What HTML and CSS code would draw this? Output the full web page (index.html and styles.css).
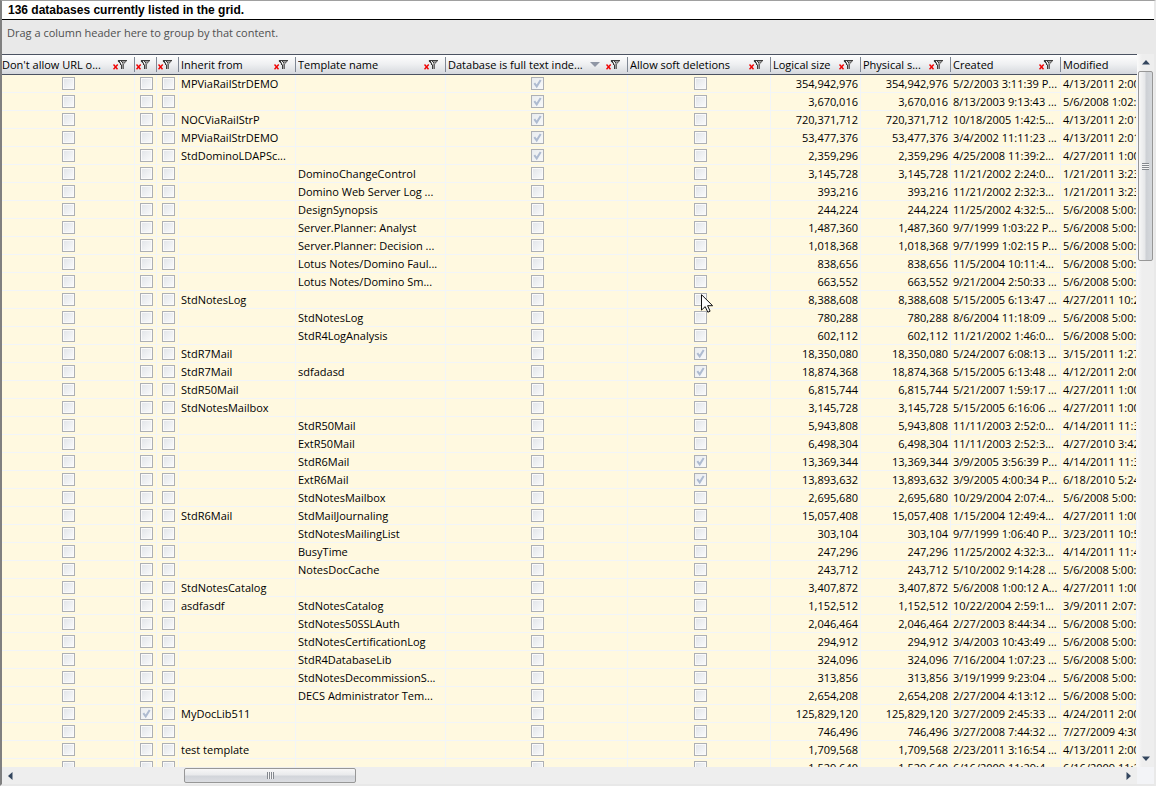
FILE: index.html
```html
<!DOCTYPE html>
<html lang="en">
<head>
<meta charset="utf-8">
<title>Databases</title>
<link rel="stylesheet" href="styles.css">
</head>
<body>
<svg class="defs" aria-hidden="true">
  <symbol id="filter" viewBox="0 0 14 10">
    <path d="M5 0h9v1l-3.5 4v4H8V5L4.5 1z" fill="#9a9a9a"/>
    <path d="M5 0h9v1H5zM5 1h2v1H5zM6 2h1v1H6zM7 3h1v2H7zM8 5h1v4H8zM9 2h1v1H9zM8 1h1v1H8z" fill="#3c3c3c"/>
    <path d="M7 1h1v1H7zM8 2h1v1H8zM8 3h1v1H8z" fill="#f2f2f2"/>
    <path d="M12 1h1v1h-1zM11 2h1v1h-1zM10 4h1v5h-1z" fill="#6a6a6a"/>
    <path d="M.5 4.5l4 4.8M4.7 4.5.5 9.3" stroke="#f00000" stroke-width="1.4"/>
  </symbol>
</svg>
<main class="panel">
  <h1 class="title">136 databases currently listed in the grid.</h1>
  <div class="group-bar">Drag a column header here to group by that content.</div>
  <div class="grid">
    <div class="viewport">
      <table class="table">
        <colgroup>
          <col class="w-url"><col class="w-flag"><col class="w-flag"><col class="w-inherit"><col class="w-template"><col class="w-index"><col class="w-soft"><col class="w-size"><col class="w-size"><col class="w-date"><col>
        </colgroup>
        <thead><tr id="head"></tr></thead>
        <tbody id="rows"></tbody>
      </table>
      <svg class="cursor" viewBox="0 0 12 19" aria-hidden="true"><path d="M.5.7v15.4l3.7-3.5 2.6 5.6 2.3-1-2.5-5.5h5z" fill="#fff" stroke="#111"/></svg>
    </div>
    <div class="vbar">
      <button class="arrow" aria-label="Scroll up"><svg width="8" height="5"><path d="M0 4.5 4 0l4 4.5z"/></svg></button>
      <div class="vtrack"><div class="thumb vthumb"></div></div>
      <button class="arrow" aria-label="Scroll down"><svg width="8" height="5"><path d="M0 .5h8L4 5z"/></svg></button>
    </div>
    <div class="hbar">
      <button class="arrow" aria-label="Scroll left"><svg width="5" height="8"><path d="M4.5 0v8L0 4z"/></svg></button>
      <div class="htrack"><div class="thumb hthumb"></div></div>
      <button class="arrow" aria-label="Scroll right"><svg width="5" height="8"><path d="M.5 0v8L5 4z"/></svg></button>
    </div>
    <div class="corner"></div>
  </div>
</main>
<script src="grid.js"></script>
</body>
</html>
```
FILE: styles.css
```css
* { box-sizing: border-box; }
body {
  margin: 0;
  font: 11px/17px "Open Sans", "Noto Sans", sans-serif;
  color: #000;
  background: #f0f0f0;
}
.defs { position: absolute; width: 0; height: 0; }
.panel {
  display: flex;
  flex-direction: column;
  height: 100vh;
  border: 1px solid #a0a0a0;
  border-left: 2px solid #808080;
  border-right: 2px solid #e9e9e9;
  border-bottom: 2px solid #e8e8e8;
  background: #e9e9e9;
}
.title {
  margin: 0;
  padding-left: 6px;
  font: bold 12px/18px "Liberation Sans", Arial, sans-serif;
  background: #fff;
  border-bottom: 1px solid #000;
}
.group-bar {
  height: 34px;
  padding: 4px 5px;
  color: #505050;
}
.grid {
  flex: 1;
  min-height: 0;
  display: grid;
  grid-template-columns: minmax(0, 1fr) 17px;
  grid-template-rows: minmax(0, 1fr) 17px;
}
.viewport { position: relative; overflow: hidden; background: #fff9e0; }
.table { width: 100%; table-layout: fixed; border-collapse: separate; border-spacing: 0; }
.w-url { width: 133px; }
.w-flag { width: 22px; }
.w-inherit { width: 117px; }
.w-template { width: 150px; }
.w-index { width: 182px; }
.w-soft { width: 143px; }
.w-size { width: 90px; }
.w-date { width: 110px; }
th {
  height: 21px;
  padding: 0;
  font-weight: normal;
  text-align: left;
  background: linear-gradient(#fff, #eeeff1 50%, #d5d8dd);
  border-top: 1px solid #4c5362;
  border-bottom: 1px solid #4c5362;
}
.head {
  display: flex;
  align-items: center;
  height: 15px;
  padding: 0 7px 0 2px;
  border-right: 1px solid #7f8794;
  overflow: hidden;
  white-space: nowrap;
  line-height: 15px;
}
.head.bare { padding: 0 6px 0 1px; }
th:last-child .head { border-right: 0; }
th:first-child .head { padding-left: 0; }
.head-text { flex: 1; overflow: hidden; }
.sort { width: 10px; height: 5px; margin-right: 6px; fill: #8f96a5; }
.filter { display: flex; flex: none; padding: 0; border: 0; background: none; }
.filter svg { width: 14px; height: 10px; }
td {
  height: 18px;
  padding: 0 0 0 2px;
  line-height: 17px;
  overflow: hidden;
  white-space: nowrap;
  background: #fff9e0;
  border-right: 1px solid #f2f5f8;
  border-bottom: 1px solid #f2f5f8;
}
.num { padding: 0 2px 0 0; text-align: right; }
.flag { padding: 0 0 0 2px; text-align: center; font-size: 0; }
.flag:first-child { padding: 0; }
.check {
  appearance: none;
  width: 13px;
  height: 13px;
  margin: 0;
  vertical-align: middle;
  border: 1px solid #adb0b5;
  background: linear-gradient(135deg, #e3e6ea, #f8f9fa) 50% / 9px 9px no-repeat #fafafa;
}
.check:checked {
  background:
    url("data:image/svg+xml,%3Csvg xmlns='http://www.w3.org/2000/svg' viewBox='0 0 11 11'%3E%3Cpath d='M2.3 5.2 4.7 8.4 8.7 2' fill='none' stroke='%23aebbd0' stroke-width='2'/%3E%3C/svg%3E") center / 11px 11px no-repeat,
    linear-gradient(135deg, #e9ecef, #f8f9fa);
}
.cursor { position: absolute; left: 699px; top: 240px; width: 12px; height: 19px; }
.vbar, .hbar { display: flex; background: #eee; }
.vbar { flex-direction: column; background: linear-gradient(90deg, #fafafa, #eee 30%); }
.vtrack, .htrack { flex: 1; min-width: 0; min-height: 0; }
.arrow {
  display: flex;
  align-items: center;
  justify-content: center;
  width: 17px;
  height: 17px;
  padding: 0;
  border: 0;
  background: none;
}
.arrow svg { fill: #34465e; }
.thumb {
  display: flex;
  align-items: center;
  justify-content: center;
  border: 1px solid #979797;
  border-radius: 2px;
}
.vthumb { width: 15px; height: 28%; margin-left: 1px; background: linear-gradient(90deg, #f7f7f7, #e6e7e9 45%, #cdd0d5 55%, #d6d9dd); }
.hthumb { width: 172px; height: 15px; margin: 1px 0 0 15%; background: linear-gradient(#f7f7f7, #e9eaec 45%, #d2d5da 55%, #dcdee2); }
.vthumb::before { content: ""; width: 7px; height: 7px; background: repeating-linear-gradient(#84888e 0 1px, #f4f4f4 1px 2px); }
.hthumb::before { content: ""; width: 7px; height: 7px; background: repeating-linear-gradient(90deg, #84888e 0 1px, #f4f4f4 1px 2px); }
.corner { background: #f3f4f7; }
```
FILE: grid.js
```js
const columns = [
  { label: "Don't allow URL o...", filter: true },
  { name: "Flag 1", filter: true },
  { name: "Flag 2", filter: true },
  { label: "Inherit from", filter: true },
  { label: "Template name", filter: true },
  { label: "Database is full text inde...", filter: true, sorted: true },
  { label: "Allow soft deletions", filter: true },
  { label: "Logical size", filter: true },
  { label: "Physical s...", filter: true },
  { label: "Created", filter: true },
  { label: "Modified" }
];

// inherit from | template | ticked column (m: flag 1, f: full text, s: soft deletions) | size | created | modified
const data = `MPViaRailStrDEMO||f|354,942,976|5/2/2003 3:11:39 P...|4/13/2011 2:00:1
||f|3,670,016|8/13/2003 9:13:43 ...|5/6/2008 1:02:51
NOCViaRailStrP||f|720,371,712|10/18/2005 1:42:5...|4/13/2011 2:01:1
MPViaRailStrDEMO||f|53,477,376|3/4/2002 11:11:23 ...|4/13/2011 2:01:1
StdDominoLDAPSc...||f|2,359,296|4/25/2008 11:39:2...|4/27/2011 1:00:1
|DominoChangeControl||3,145,728|11/21/2002 2:24:0...|1/21/2011 3:23:1
|Domino Web Server Log ...||393,216|11/21/2002 2:32:3...|1/21/2011 3:23:1
|DesignSynopsis||244,224|11/25/2002 4:32:5...|5/6/2008 5:00:31
|Server.Planner: Analyst||1,487,360|9/7/1999 1:03:22 P...|5/6/2008 5:00:41
|Server.Planner: Decision ...||1,018,368|9/7/1999 1:02:15 P...|5/6/2008 5:00:41
|Lotus Notes/Domino Faul...||838,656|11/5/2004 10:11:4...|5/6/2008 5:00:31
|Lotus Notes/Domino Sm...||663,552|9/21/2004 2:50:33 ...|5/6/2008 5:00:51
StdNotesLog|||8,388,608|5/15/2005 6:13:47 ...|4/27/2011 10:21
|StdNotesLog||780,288|8/6/2004 11:18:09 ...|5/6/2008 5:00:51
|StdR4LogAnalysis||602,112|11/21/2002 1:46:0...|5/6/2008 5:00:51
StdR7Mail||s|18,350,080|5/24/2007 6:08:13 ...|3/15/2011 1:27:1
StdR7Mail|sdfadasd|s|18,874,368|5/15/2005 6:13:48 ...|4/12/2011 2:00:1
StdR50Mail|||6,815,744|5/21/2007 1:59:17 ...|4/27/2011 1:00:1
StdNotesMailbox|||3,145,728|5/15/2005 6:16:06 ...|4/27/2011 1:00:1
|StdR50Mail||5,943,808|11/11/2003 2:52:0...|4/14/2011 11:31
|ExtR50Mail||6,498,304|11/11/2003 2:52:3...|4/27/2010 3:42:1
|StdR6Mail|s|13,369,344|3/9/2005 3:56:39 P...|4/14/2011 11:31
|ExtR6Mail|s|13,893,632|3/9/2005 4:00:34 P...|6/18/2010 5:24:1
|StdNotesMailbox||2,695,680|10/29/2004 2:07:4...|5/6/2008 5:00:51
StdR6Mail|StdMailJournaling||15,057,408|1/15/2004 12:49:4...|4/27/2011 1:00:1
|StdNotesMailingList||303,104|9/7/1999 1:06:40 P...|3/23/2011 10:51
|BusyTime||247,296|11/25/2002 4:32:3...|4/14/2011 11:41
|NotesDocCache||243,712|5/10/2002 9:14:28 ...|5/6/2008 5:00:31
StdNotesCatalog|||3,407,872|5/6/2008 1:00:12 A...|4/27/2011 1:00:1
asdfasdf|StdNotesCatalog||1,152,512|10/22/2004 2:59:1...|3/9/2011 2:07:31
|StdNotes50SSLAuth||2,046,464|2/27/2003 8:44:34 ...|5/6/2008 5:00:31
|StdNotesCertificationLog||294,912|3/4/2003 10:43:49 ...|5/6/2008 5:00:31
|StdR4DatabaseLib||324,096|7/16/2004 1:07:23 ...|5/6/2008 5:00:31
|StdNotesDecommissionS...||313,856|3/19/1999 9:23:04 ...|5/6/2008 5:00:31
|DECS Administrator Tem...||2,654,208|2/27/2004 4:13:12 ...|5/6/2008 5:00:31
MyDocLib511||m|125,829,120|3/27/2009 2:45:33 ...|4/24/2011 2:00:1
|||746,496|3/27/2008 7:44:32 ...|7/27/2009 4:30:1
test template|||1,709,568|2/23/2011 3:16:54 ...|4/13/2011 2:00:1
|||1,529,640|6/16/2009 11:29:4...|6/16/2009 11:21`;

const icon = '<svg aria-hidden="true"><use href="#filter"/></svg>';
document.getElementById("head").innerHTML = columns.map(c => `<th scope="col"><div class="head${c.label ? "" : " bare"}"><span class="head-text">${c.label || ""}</span>${c.sorted ? '<svg class="sort"><path d="M0 0h10L5 5z"/></svg>' : ""}${c.filter ? `<button class="filter" aria-label="Filter ${c.label || c.name}">${icon}</button>` : ""}</div></th>`).join("");

const check = (on, label) => `<td class="flag"><input class="check" type="checkbox" aria-label="${label}"${on ? " checked" : ""}></td>`;
document.getElementById("rows").innerHTML = data.split("\n").map(line => {
  const [inherit, template, flags, size, created, modified] = line.split("|");
  return `<tr>${check(false, "Don't allow URL open")}${check(flags === "m", "Flag 1")}${check(false, "Flag 2")}
    <td>${inherit}</td><td>${template}</td>
    ${check(flags === "f", "Full text indexed")}${check(flags === "s", "Allow soft deletions")}
    <td class="num">${size}</td><td class="num">${size}</td><td>${created}</td><td>${modified}</td></tr>`;
}).join("");
```
